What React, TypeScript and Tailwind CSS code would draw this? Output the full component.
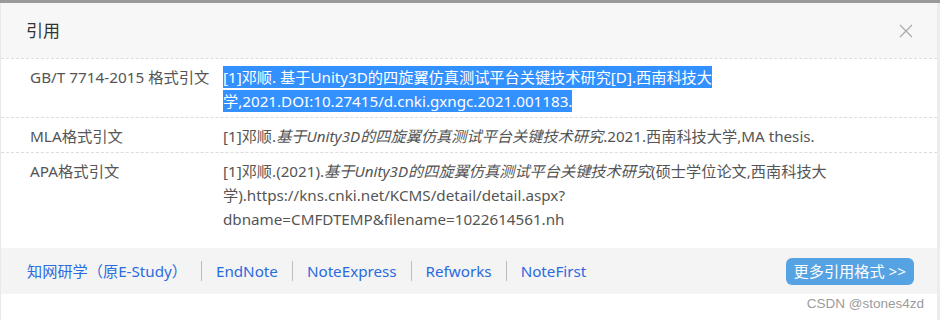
import React from "react";

const font = { fontFamily: "'Noto Sans', 'Noto Sans CJK SC', sans-serif" };

const links = ["知网研学（原E-Study）", "EndNote", "NoteExpress", "Refworks", "NoteFirst"];

const App = () => {
  return (
    <div className="w-[940px] h-[320px] bg-[#9a9a9a] pt-[3px] overflow-hidden relative" style={font}>
      <div className="h-full bg-white border-l border-[#e8e8e8] border-r-[3px] border-r-[#ededed]">
        {/* Header */}
        <div className="h-[55px] bg-[#f7f7f7] flex items-center justify-between pl-[25px] pr-[24px]">
          <span className="text-[17px] text-[#333]">引用</span>
          <svg width="14" height="14" viewBox="0 0 14 14" className="text-[#aaa]">
            <path d="M1 1L13 13M13 1L1 13" stroke="currentColor" strokeWidth="1.2" />
          </svg>
        </div>

        {/* Citations */}
        <div className="text-[15.2px] leading-6 text-[#555]">
          <div className="flex border-t border-dashed border-[#dcdcdc] pt-[6px] pb-[4px]">
            <div className="w-[222px] shrink-0 pl-[29px] text-[15.3px]">GB/T 7714-2015 格式引文</div>
            <div className="w-[620px]">
              <span className="bg-[#3390ff] text-white py-[1px]">
                [1]邓顺. 基于Unity3D的四旋翼仿真测试平台关键技术研究[D].西南科技大
                <br />
                学,2021.DOI:10.27415/d.cnki.gxngc.2021.001183.
              </span>
            </div>
          </div>
          <div className="flex border-t border-dashed border-[#dcdcdc] pt-[6px] pb-[4px]">
            <div className="w-[222px] shrink-0 pl-[29px] text-[15.3px]">MLA格式引文</div>
            <div className="w-[620px]">
              [1]邓顺.<i>基于Unity3D的四旋翼仿真测试平台关键技术研究</i>.2021.西南科技大学,MA thesis.
            </div>
          </div>
          <div className="flex border-t border-dashed border-[#dcdcdc] pt-[6px] pb-[4px]">
            <div className="w-[222px] shrink-0 pl-[29px] text-[15.3px]">APA格式引文</div>
            <div className="w-[620px]">
              [1]邓顺.(2021).<i>基于Unity3D的四旋翼仿真测试平台关键技术研究</i>(硕士学位论文,西南科技大
              <br />
              学).https://kns.cnki.net/KCMS/detail/detail.aspx?
              <br />
              dbname=CMFDTEMP&amp;filename=1022614561.nh
            </div>
          </div>
        </div>

        {/* Footer */}
        <div className="mt-[13px] h-[46px] bg-[#f4f4f4] flex items-center justify-between pl-[26px] pr-[23px]">
          <div className="flex items-center text-[15.2px] text-[#2a6be0]">
            {links.map((l, i) => (
              <React.Fragment key={l}>
                {i > 0 && <span className="w-px h-[20px] bg-[#bdbdbd] mx-[14px]" />}
                <span>{l}</span>
              </React.Fragment>
            ))}
          </div>
          <div className="h-[27px] px-[8px] rounded-md bg-[#55a3e3] text-white text-[15.2px] flex items-center">
            更多引用格式 &gt;&gt;
          </div>
        </div>
      </div>

      {/* watermark */}
      <div
        className="absolute right-[16px] bottom-[6px] text-[13.5px] text-[#9b9b9b]"
        style={{ fontFamily: "'Liberation Sans', Arial, sans-serif" }}
      >
        CSDN @stones4zd
      </div>
    </div>
  );
};

export default App;
